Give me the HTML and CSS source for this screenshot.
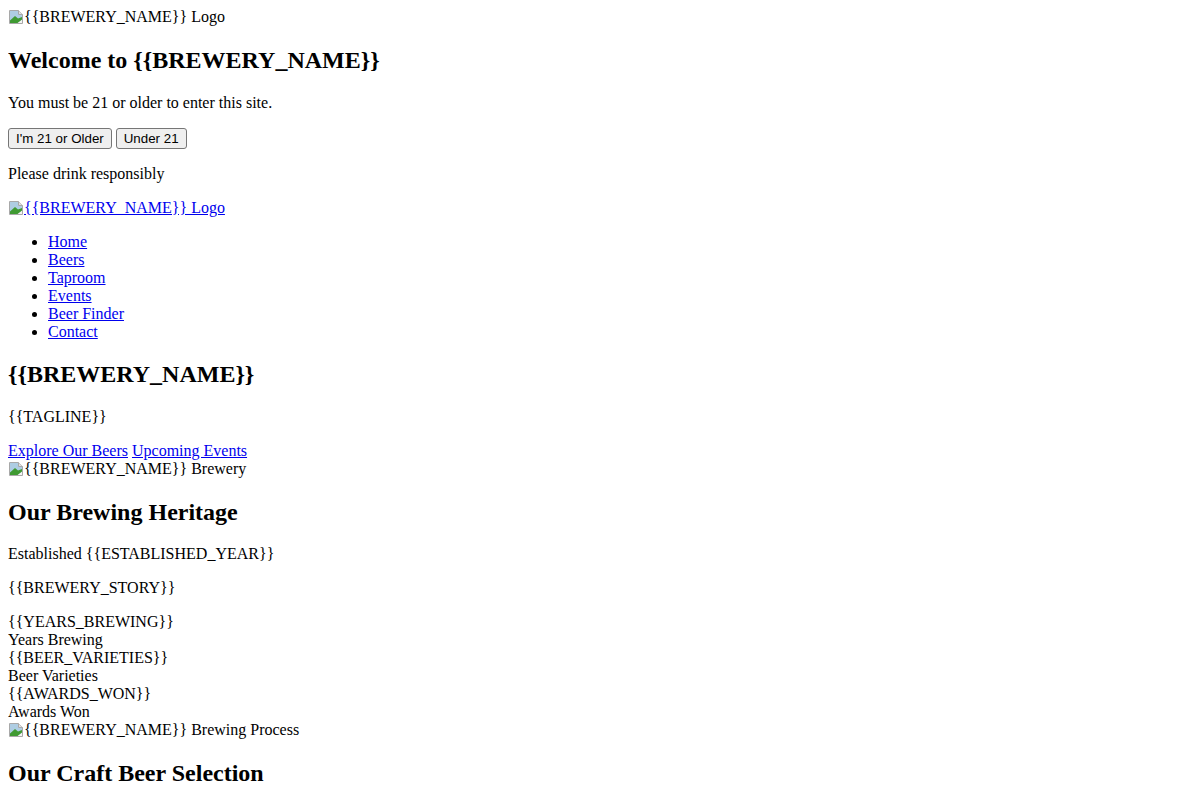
FILE: index.html
```html
<!DOCTYPE html>
<html>
<head>
<meta charset="utf-8">
<link rel="stylesheet" href="styles.css">
</head>
<body>
<div class="age-gate">
  <div class="img-alt"><svg class="broken" width="16" height="16" viewBox="0 0 16 16"><path d="M1.5 1.5h9l4 4v9h-13z" fill="#f4f4f4" stroke="#a8a8a8"/><path d="M2 2h8.5v3.5H14v5L9 14H2z" fill="#aecde3"/><path d="M2 14v-2.5l5-4.5 3 2.5 4-1.5v2.5L9.5 14z" fill="#3f9a32"/><path d="M10.5 1.5v4h4" fill="#e0e0e0" stroke="#a8a8a8"/></svg>{{BREWERY_NAME}} Logo</div>
  <h2 class="title">Welcome to {{BREWERY_NAME}}</h2>
  <p class="text">You must be 21 or older to enter this site.</p>
  <div class="actions"><button class="btn">I'm 21 or Older</button> <button class="btn">Under 21</button></div>
  <p class="text">Please drink responsibly</p>
</div>
<header class="site-header">
  <a class="link" href="#"><svg class="broken" width="16" height="16" viewBox="0 0 16 16"><path d="M1.5 1.5h9l4 4v9h-13z" fill="#f4f4f4" stroke="#a8a8a8"/><path d="M2 2h8.5v3.5H14v5L9 14H2z" fill="#aecde3"/><path d="M2 14v-2.5l5-4.5 3 2.5 4-1.5v2.5L9.5 14z" fill="#3f9a32"/><path d="M10.5 1.5v4h4" fill="#e0e0e0" stroke="#a8a8a8"/></svg>{{BREWERY_NAME}} Logo</a>
  <ul class="nav">
    <li><a class="link" href="#">Home</a></li>
    <li><a class="link" href="#">Beers</a></li>
    <li><a class="link" href="#">Taproom</a></li>
    <li><a class="link" href="#">Events</a></li>
    <li><a class="link" href="#">Beer Finder</a></li>
    <li><a class="link" href="#">Contact</a></li>
  </ul>
</header>
<section class="hero">
  <h2 class="title">{{BREWERY_NAME}}</h2>
  <p class="text">{{TAGLINE}}</p>
  <div><a class="link" href="#">Explore Our Beers</a> <a class="link" href="#">Upcoming Events</a></div>
  <div class="img-alt"><svg class="broken" width="16" height="16" viewBox="0 0 16 16"><path d="M1.5 1.5h9l4 4v9h-13z" fill="#f4f4f4" stroke="#a8a8a8"/><path d="M2 2h8.5v3.5H14v5L9 14H2z" fill="#aecde3"/><path d="M2 14v-2.5l5-4.5 3 2.5 4-1.5v2.5L9.5 14z" fill="#3f9a32"/><path d="M10.5 1.5v4h4" fill="#e0e0e0" stroke="#a8a8a8"/></svg>{{BREWERY_NAME}} Brewery</div>
</section>
<section class="about">
  <h2 class="title">Our Brewing Heritage</h2>
  <p class="text">Established {{ESTABLISHED_YEAR}}</p>
  <p class="text">{{BREWERY_STORY}}</p>
  <div class="stats">
    <div>{{YEARS_BREWING}}</div>
    <div>Years Brewing</div>
    <div>{{BEER_VARIETIES}}</div>
    <div>Beer Varieties</div>
    <div>{{AWARDS_WON}}</div>
    <div>Awards Won</div>
  </div>
  <div class="img-alt"><svg class="broken" width="16" height="16" viewBox="0 0 16 16"><path d="M1.5 1.5h9l4 4v9h-13z" fill="#f4f4f4" stroke="#a8a8a8"/><path d="M2 2h8.5v3.5H14v5L9 14H2z" fill="#aecde3"/><path d="M2 14v-2.5l5-4.5 3 2.5 4-1.5v2.5L9.5 14z" fill="#3f9a32"/><path d="M10.5 1.5v4h4" fill="#e0e0e0" stroke="#a8a8a8"/></svg>{{BREWERY_NAME}} Brewing Process</div>
</section>
<section class="beers">
  <h2 class="title">Our Craft Beer Selection</h2>
</section>
</body>
</html>
```
FILE: styles.css
```css
html, body {
  font-family: "Liberation Serif", "Times New Roman", serif;
  font-size: 16px;
  color: #000;
  background: #fff;
}
body {
  margin: 8px;
}
.title {
  font-size: 24px;
  font-weight: bold;
  margin: 19.92px 0;
}
.text {
  margin: 16px 0;
}
.link {
  color: #0000ee;
  text-decoration: underline;
}
.img-alt {
  height: 19px;
}
.broken {
  vertical-align: -3px;
}
.btn {
  font-family: "Liberation Sans", Arial, sans-serif;
  font-size: 13.333px;
  color: #000;
  background: #efefef;
  border: 1px solid #767676;
  border-radius: 3px;
  padding: 2px 7px;
  margin: 0;
  line-height: normal;
}
.nav {
  margin: 16px 0;
  padding-left: 40px;
  list-style: disc;
}
```
